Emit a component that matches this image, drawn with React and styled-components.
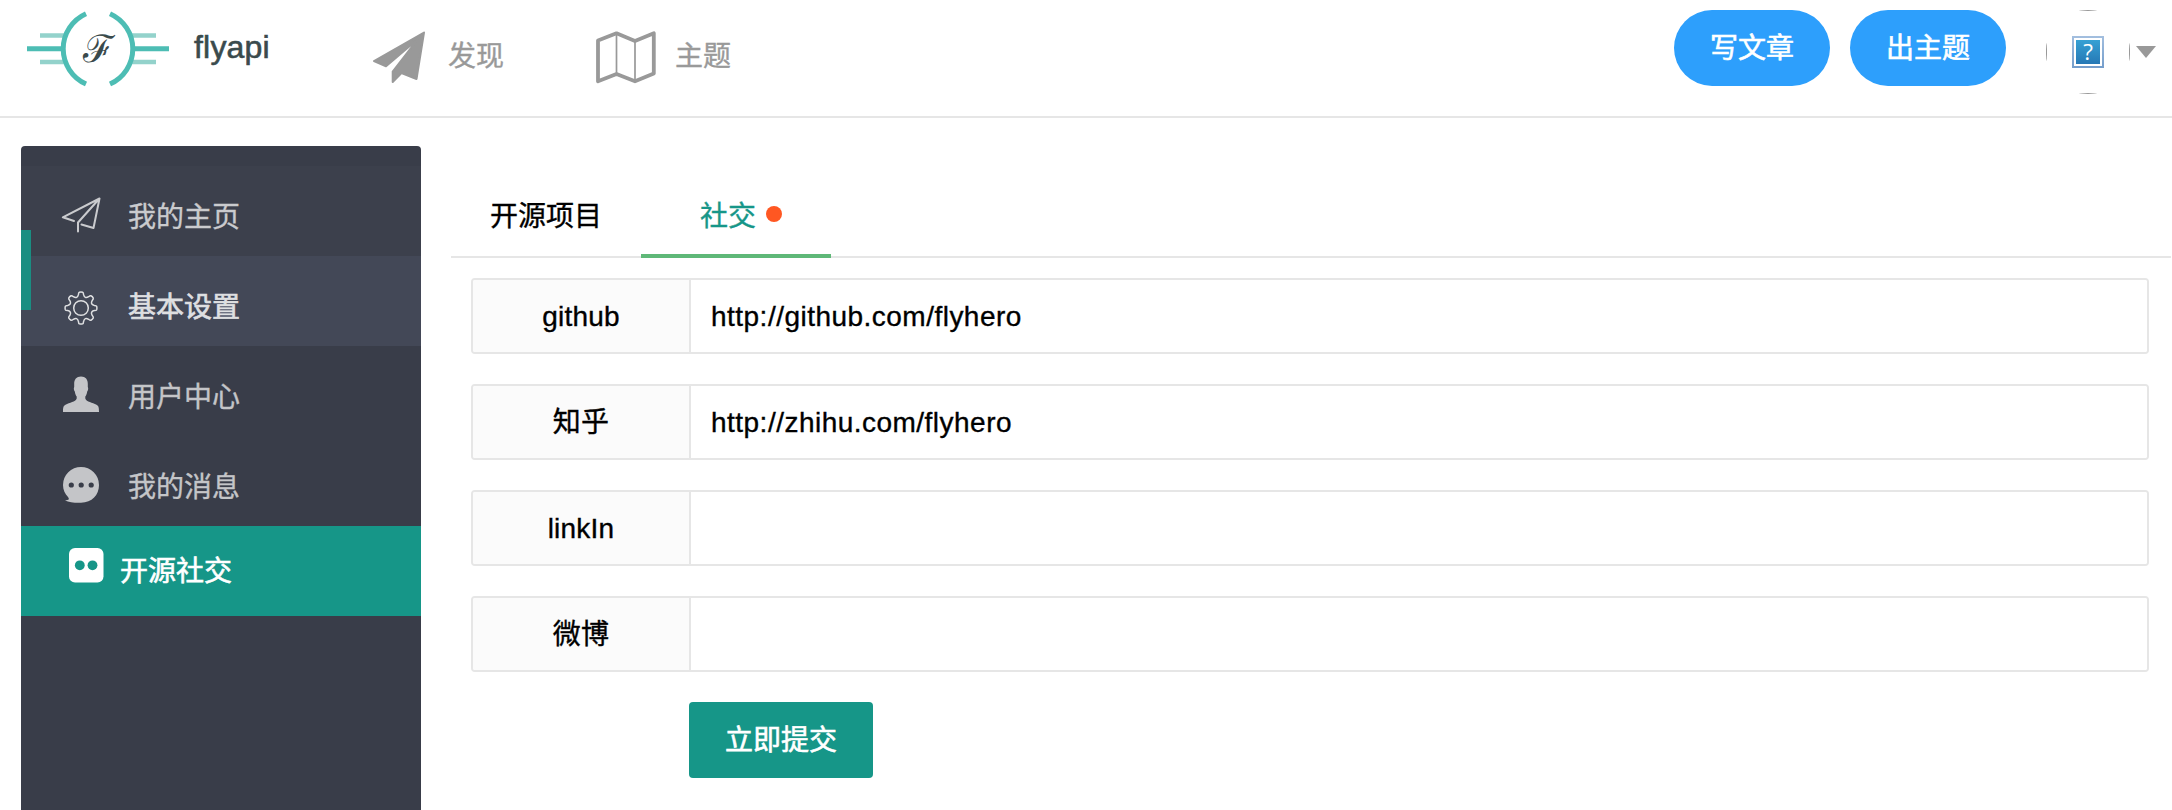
import React from "react";
import styled, { createGlobalStyle, css } from "styled-components";

const GlobalStyle = createGlobalStyle`
  * { box-sizing: border-box; }
  body {
    margin: 0;
    background: #fff;
    color: #000;
    font: 28px/40px "Liberation Sans", "Noto Sans CJK SC", sans-serif;
    -webkit-text-stroke: 0.35px currentColor;
    overflow: hidden;
  }
  svg { display: block; flex: none; -webkit-text-stroke: 0; }
`;

const Page = styled.div`
  width: 100%;
  height: 810px;
  display: flex;
  flex-direction: column;
  overflow: hidden;
`;

const Header = styled.header`
  flex: none;
  height: 118px;
  border-bottom: 2px solid #e6e6e6;
  display: flex;
  align-items: flex-start;
  padding: 10px 16px 0 27px;
`;

const Brand = styled.div`
  display: flex;
  width: 346px;
  gap: 25px;
`;

const BrandName = styled.span`
  font-size: 32px;
  line-height: 40px;
  padding-top: 17px;
  letter-spacing: 0.2px;
  color: #3a4a4c;
  -webkit-text-stroke: 0.6px currentColor;
`;

const NavLink = styled.a`
  display: flex;
  width: 223px;
  gap: ${(p) => p.$gap}px;
  padding-top: 21px;
  color: #999;
`;

const NavText = styled.span`
  padding-top: 6px;
`;

const Actions = styled.div`
  margin-left: auto;
  display: flex;
  gap: 20px;
`;

const PillButton = styled.button`
  width: 156px;
  height: 76px;
  border: 0;
  border-radius: 38px;
  background: #2d9ffc;
  color: #fff;
  font: inherit;
  -webkit-text-stroke: 0.6px currentColor;
  padding: 2px 0 0;
`;

const Account = styled.div`
  display: flex;
  gap: 6px;
  margin-left: 20px;
`;

const Caret = styled.span`
  margin-top: 36px;
  width: 0;
  height: 0;
  border: 10px solid transparent;
  border-top: 12px solid #999;
  border-bottom: 0;
`;

const Body = styled.div`
  flex: 1;
  display: flex;
  padding: 28px 1px 0 21px;
  gap: 30px;
`;

const Sidebar = styled.nav`
  position: relative;
  flex: none;
  width: 400px;
  padding-top: 20px;
  background: #393d49;
  border-radius: 4px 4px 0 0;
`;

const ActiveBar = styled.span`
  position: absolute;
  left: 0;
  top: 84px;
  width: 10px;
  height: 80px;
  background: #1a8e82;
`;

const tones = {
  normal: css`
    color: #c4c5c8;
  `,
  soft: css`
    color: #cacbce;
    background: #3c404c;
  `,
  hover: css`
    color: #dedfe1;
    background: #434857;
    -webkit-text-stroke: 0.7px currentColor;
  `,
  active: css`
    color: #fff;
    background: #169688;
    -webkit-text-stroke: 0.6px currentColor;
  `,
};

const MenuItem = styled.a`
  display: flex;
  align-items: center;
  height: 90px;
  padding-left: ${(p) => (p.$tone === "active" ? 48 : 38)}px;
  gap: ${(p) => (p.$tone === "active" ? 11 : 25)}px;
  padding-top: ${(p) => (p.$tone === "active" ? 0 : 10)}px;
  ${(p) => tones[p.$tone]}
`;

const MenuIcon = styled.span`
  flex: none;
  width: ${(p) => (p.$small ? 40 : 44)}px;
  display: flex;
  justify-content: ${(p) => (p.$small ? "flex-start" : "center")};
  padding-bottom: ${(p) => p.$lift || 0}px;
  padding-top: ${(p) => p.$drop || 0}px;
`;

const MenuText = styled.span`
  padding-top: ${(p) => (p.$flush ? 1 : 3)}px;
`;

const Content = styled.main`
  flex: 1;
  padding-top: 30px;
`;

const Tabs = styled.div`
  display: flex;
  height: 82px;
  border-bottom: 2px solid #e6e6e6;
`;

const Tab = styled.div`
  display: flex;
  width: 190px;
  height: 82px;
  padding: 21px 0 17px ${(p) => (p.$active ? 59 : 39)}px;
  border-bottom: 4px solid ${(p) => (p.$active ? "#5fb878" : "transparent")};
  color: ${(p) => (p.$active ? "#169688" : "#000")};
  white-space: nowrap;
`;

const Dot = styled.span`
  width: 16px;
  height: 16px;
  margin: 9px 0 0 10px;
  border-radius: 50%;
  background: #ff5722;
`;

const Form = styled.form`
  padding: 20px 22px 0 20px;
  display: flex;
  flex-direction: column;
  gap: 30px;
`;

const Field = styled.label`
  display: flex;
  height: 76px;
  border: 2px solid #e6e6e6;
  border-radius: 4px;
  overflow: hidden;
`;

const FieldLabel = styled.span`
  flex: none;
  width: 218px;
  padding-top: 1px;
  border-right: 2px solid #e6e6e6;
  background: #fbfbfb;
  text-align: center;
  line-height: 72px;
  letter-spacing: 0.2px;
`;

const FieldInput = styled.input`
  flex: 1;
  border: 0;
  outline: 0;
  padding: 1px 20px 0;
  font: inherit;
  letter-spacing: 0.48px;
  color: #000;
  background: #fff;
`;

const Submit = styled.button`
  width: 184px;
  height: 76px;
  margin-left: 218px;
  border: 0;
  border-radius: 4px;
  background: #169688;
  color: #fff;
  font: inherit;
  -webkit-text-stroke: 0.6px currentColor;
  padding: 2px 0 0;
`;

const Logo = () => (
  <svg width="142" height="78" viewBox="27 10 142 78" fill="none">
    <g stroke="#93d2cb" strokeWidth="4.5">
      <path d="M40 35.500H64M40 62H64M132 35.500H156M132 62H156" />
    </g>
    <g stroke="#4dbdb4" strokeWidth="5">
      <path d="M27 48.700H61M135 48.700H169" />
      <path d="M86 13.700A38.500 38.500 0 0 0 86 84M110 13.700A38.500 38.500 0 0 1 110 84" strokeWidth="5" />
    </g>
    <text x="98" y="62" textAnchor="middle" fontSize="38" fill="#3a4a4c" fontFamily="'DejaVu Serif', serif">ℱ</text>
  </svg>
);

const PlaneSolid = () => (
  <svg width="53" height="53" viewBox="373 31 53 53">
    <path
      d="M424 32.500L374 61L386 66.300L417.500 39.500L392.700 71.500V82L401.500 73L416.500 79Z"
      fill="#999" stroke="#999" strokeWidth="2" strokeLinejoin="round"
    />
  </svg>
);

const MapIcon = () => (
  <svg width="61" height="53" viewBox="596 31 61 53" fill="none" stroke="#999" strokeLinejoin="round">
    <path d="M598 40.500L616.500 33.300L635 41L653.800 33.300V73.500L635 81.300L616.500 74L598 81.300Z" strokeWidth="3.800" />
    <path d="M616.500 33V74M635 41V81" strokeWidth="1.700" />
  </svg>
);

const MissingAvatar = () => (
  <svg width="84" height="84" viewBox="2046 10 84 84">
    <defs>
      <linearGradient id="tile" x1="0" y1="0" x2="0" y2="1">
        <stop offset="0" stopColor="#36a1d4" />
        <stop offset="1" stopColor="#2678b5" />
      </linearGradient>
      <linearGradient id="frame" x1="0" y1="0" x2="0" y2="1">
        <stop offset="0" stopColor="#a3bfdf" />
        <stop offset="1" stopColor="#749dcb" />
      </linearGradient>
    </defs>
    <g fill="#999">
      <ellipse cx="2088" cy="10.500" rx="9" ry=".5" />
      <ellipse cx="2088" cy="93.500" rx="9" ry=".5" />
      <ellipse cx="2046.500" cy="52" rx=".5" ry="9" />
      <ellipse cx="2129.500" cy="52" rx=".5" ry="9" />
    </g>
    <rect x="2072" y="36" width="32" height="32" fill="url(#frame)" />
    <rect x="2074" y="38" width="28" height="28" fill="#fff" />
    <rect x="2076" y="40" width="24" height="24" fill="url(#tile)" />
    <text x="2088" y="59.800" textAnchor="middle" fontSize="22.500" fontFamily="'Open Sans', sans-serif" fill="#fff">?</text>
  </svg>
);

const PlaneOutline = () => (
  <svg width="42" height="38" viewBox="60 196 42 38" fill="none" stroke="currentColor" strokeWidth="2" strokeLinejoin="round" strokeLinecap="round">
    <path d="M74 221L62.800 217.300L99.500 198.500L93.500 228L81.500 224.500M99.500 198.500L78 222.500V231.500" />
  </svg>
);

const gearPath = (() => {
  const steps = [];
  for (let i = 0; i < 8; i++) {
    const at = (r, deg) => {
      const a = ((i * 45 + deg - 90) * Math.PI) / 180;
      return `${(r * Math.cos(a)).toFixed(2)} ${(r * Math.sin(a)).toFixed(2)}`;
    };
    steps.push(
      `${i ? "L" : "M"}${at(15.8, -6)}Q${at(16.2, 0)} ${at(15.8, 6)}`,
      `Q${at(15.6, 9)} ${at(13.6, 11)}Q${at(9.600, 22.500)} ${at(13.6, 34)}Q${at(15.6, 36)} ${at(15.8, 39)}`
    );
  }
  return steps.join("") + "Z";
})();

const Gear = () => (
  <svg width="36" height="36" viewBox="-18 -18 36 36" fill="none" stroke="currentColor" strokeWidth="1.500">
    <path d={gearPath} />
    <circle r="7.300" />
  </svg>
);

const UserIcon = () => (
  <svg width="36" height="36" viewBox="63 376 36 36" fill="currentColor">
    <path d="M81 376.500C85.500 376.500 88 379.500 87.800 384V387C88.500 388 88.200 390.500 87.200 391.500C86.800 394 86.200 395.500 85.300 396.500V398.500C86.500 402 92.500 402.500 96.500 404.800C98.600 406 99 407.500 99 412H63C63 407.500 63.400 406 65.500 404.800C69.500 402.500 75.500 402 76.700 398.500V396.500C75.800 395.500 75.200 394 74.800 391.500C73.800 390.500 73.500 388 74.200 387V384C74 379.500 76.500 376.500 81 376.500Z" />
  </svg>
);

const ChatIcon = () => (
  <svg width="36" height="36" viewBox="63 467 36 36">
    <path fill="currentColor" d="M81 467A18 18 0 0 1 99 485C99 495 92 502.500 81 502.800C75 503 69 502.500 65 500.500C66.800 500.300 68.200 500 68.800 499.200C69 498.500 68.700 497.800 68 497C65 494 63 490 63 485A18 18 0 0 1 81 467Z" />
    <g fill="#393d49">
      <circle cx="71.300" cy="485" r="2.600" />
      <circle cx="81.200" cy="485" r="2.600" />
      <circle cx="91.200" cy="485" r="2.600" />
    </g>
  </svg>
);

const SocialIcon = () => (
  <svg width="35" height="35" viewBox="0 0 35 35">
    <rect width="34.500" height="34.500" rx="6" fill="#fff" />
    <circle cx="10.800" cy="17.300" r="4.900" fill="#169688" />
    <circle cx="23.500" cy="17.300" r="4.900" fill="#169688" />
  </svg>
);

const menu = [
  { label: "我的主页", tone: "soft", icon: <PlaneOutline />, lift: 3 },
  { label: "基本设置", tone: "hover", icon: <Gear />, drop: 4 },
  { label: "用户中心", tone: "normal", icon: <UserIcon />, lift: 4 },
  { label: "我的消息", tone: "normal", icon: <ChatIcon />, lift: 2 },
  { label: "开源社交", tone: "active", icon: <SocialIcon />, lift: 11 },
];

const fields = [
  { label: "github", value: "http://github.com/flyhero" },
  { label: "知乎", value: "http://zhihu.com/flyhero" },
  { label: "linkIn", value: "" },
  { label: "微博", value: "" },
];

export default function App() {
  return (
    <Page>
      <GlobalStyle />
      <Header>
        <Brand>
          <Logo />
          <BrandName>flyapi</BrandName>
        </Brand>
        <NavLink $gap={22}>
          <PlaneSolid />
          <NavText>发现</NavText>
        </NavLink>
        <NavLink $gap={18}>
          <MapIcon />
          <NavText>主题</NavText>
        </NavLink>
        <Actions>
          <PillButton>写文章</PillButton>
          <PillButton>出主题</PillButton>
          <Account>
            <MissingAvatar />
            <Caret />
          </Account>
        </Actions>
      </Header>
      <Body>
        <Sidebar>
          {menu.map((m) => (
            <MenuItem key={m.label} $tone={m.tone}>
              <MenuIcon $small={m.tone === "active"} $lift={m.lift} $drop={m.drop}>
                {m.icon}
              </MenuIcon>
              <MenuText $flush={m.tone === "active"}>{m.label}</MenuText>
            </MenuItem>
          ))}
          <ActiveBar />
        </Sidebar>
        <Content>
          <Tabs>
            <Tab>开源项目</Tab>
            <Tab $active>
              社交
              <Dot />
            </Tab>
          </Tabs>
          <Form>
            {fields.map((f) => (
              <Field key={f.label}>
                <FieldLabel>{f.label}</FieldLabel>
                <FieldInput defaultValue={f.value} />
              </Field>
            ))}
            <Submit type="button">立即提交</Submit>
          </Form>
        </Content>
      </Body>
    </Page>
  );
}
